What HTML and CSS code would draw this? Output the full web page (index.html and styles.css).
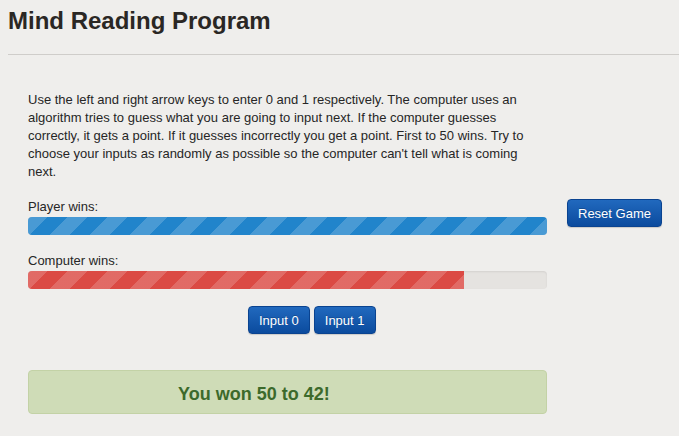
FILE: index.html
```html
<!DOCTYPE html>
<html>
<head>
    <meta charset="utf-8">
    <meta name="viewport" content="width=device-width, initial-scale=1">
    <title>Mind Reading Program</title>
    <link rel="stylesheet" href="styles.css">
</head>

<body>
    <div class="header">
        <h1 class="title">Mind Reading Program</h1>
        <hr class="rule">
    </div>

    <div class="content">
        <p class="intro">Use the left and right arrow keys to enter 0 and 1 respectively. The computer uses an algorithm tries to guess what you are going to input next. If the computer guesses correctly, it gets a point. If it guesses incorrectly you get a point. First to 50 wins. Try to choose your inputs as randomly as possible so the computer can't tell what is coming next.</p>

        <div class="game">
            <div class="board">
                <div class="label">Player wins:</div>
                <div class="progress">
                    <div class="bar bar-player" style="width: 100%;"></div>
                </div>

                <div class="label">Computer wins:</div>
                <div class="progress">
                    <div class="bar bar-computer" style="width: 84%;"></div>
                </div>

                <div class="inputs">
                    <button class="btn">Input 0</button>
                    <button class="btn">Input 1</button>
                </div>

                <div class="alert">You won 50 to 42!</div>
            </div>

            <div class="side">
                <button class="btn">Reset Game</button>
            </div>
        </div>
    </div>
</body>
</html>
```

FILE: styles.css
```css
body, html {
    margin: 0;
    padding: 0;
    background-color: #efeeec;
    color: #262626;
    font-family: "Liberation Sans", Arial, sans-serif;}

.header {
    padding: 8px 0 0 8px;}

.title {
    margin: 0;
    font-size: 24px;
    line-height: 26px;
    font-weight: bold;
    color: #2a2724;}

.rule {
    margin: 20px 0 0 0;
    height: 0;
    border: 0;
    border-top: 1px solid #cfcdca;}

.content {
    padding-left: 28px;}

.intro {
    width: 519px;
    margin: 36px 0 17px 0;
    font-size: 13px;
    line-height: 18px;}

.game {
    display: flex;}

.board {
    width: 519px;}

.side {
    margin-left: 20px;
    padding-top: 1px;}

.label {
    font-size: 13px;
    line-height: 18px;}

.progress {
    height: 18px;
    margin: 1px 0 17px 0;
    background-color: #e5e3e0;
    border-radius: 4px;
    box-shadow: inset 0 1px 2px rgba(0, 0, 0, 0.08);
    overflow: hidden;}

/* stripes: 40px apart along the bar, 20px light */
.bar {
    height: 100%;
    background-image: repeating-linear-gradient(135deg,
        rgba(255, 255, 255, 0.18) 0, rgba(255, 255, 255, 0.18) 14px,
        transparent 14px, transparent 28.28px);}

.bar-player {
    background-color: #2184cb;}

.bar-computer {
    background-color: #db4a44;}

.inputs {
    display: flex;
    gap: 4px;
    margin-top: 1px;
    padding-left: 220px;}

.btn {
    height: 28px;
    padding: 0 10px;
    border: 1px solid #0a4390;
    border-radius: 4px;
    background-image: linear-gradient(#2169be, #0b4b9e);
    box-shadow: 0 1px 1px rgba(0, 0, 0, 0.15);
    color: #fff;
    font-family: "Liberation Sans", Arial, sans-serif;
    font-size: 13px;
    text-shadow: 0 -1px 0 rgba(0, 0, 0, 0.2);
    cursor: pointer;}

.alert {
    height: 24px;
    margin-top: 36px;
    padding: 11px 14px 7px 149px;
    background-color: #cfdcb7;
    border: 1px solid #c3d2a6;
    border-radius: 4px;
    color: #3c6a2b;
    font-size: 18px;
    line-height: 24px;
    font-weight: bold;}
```
